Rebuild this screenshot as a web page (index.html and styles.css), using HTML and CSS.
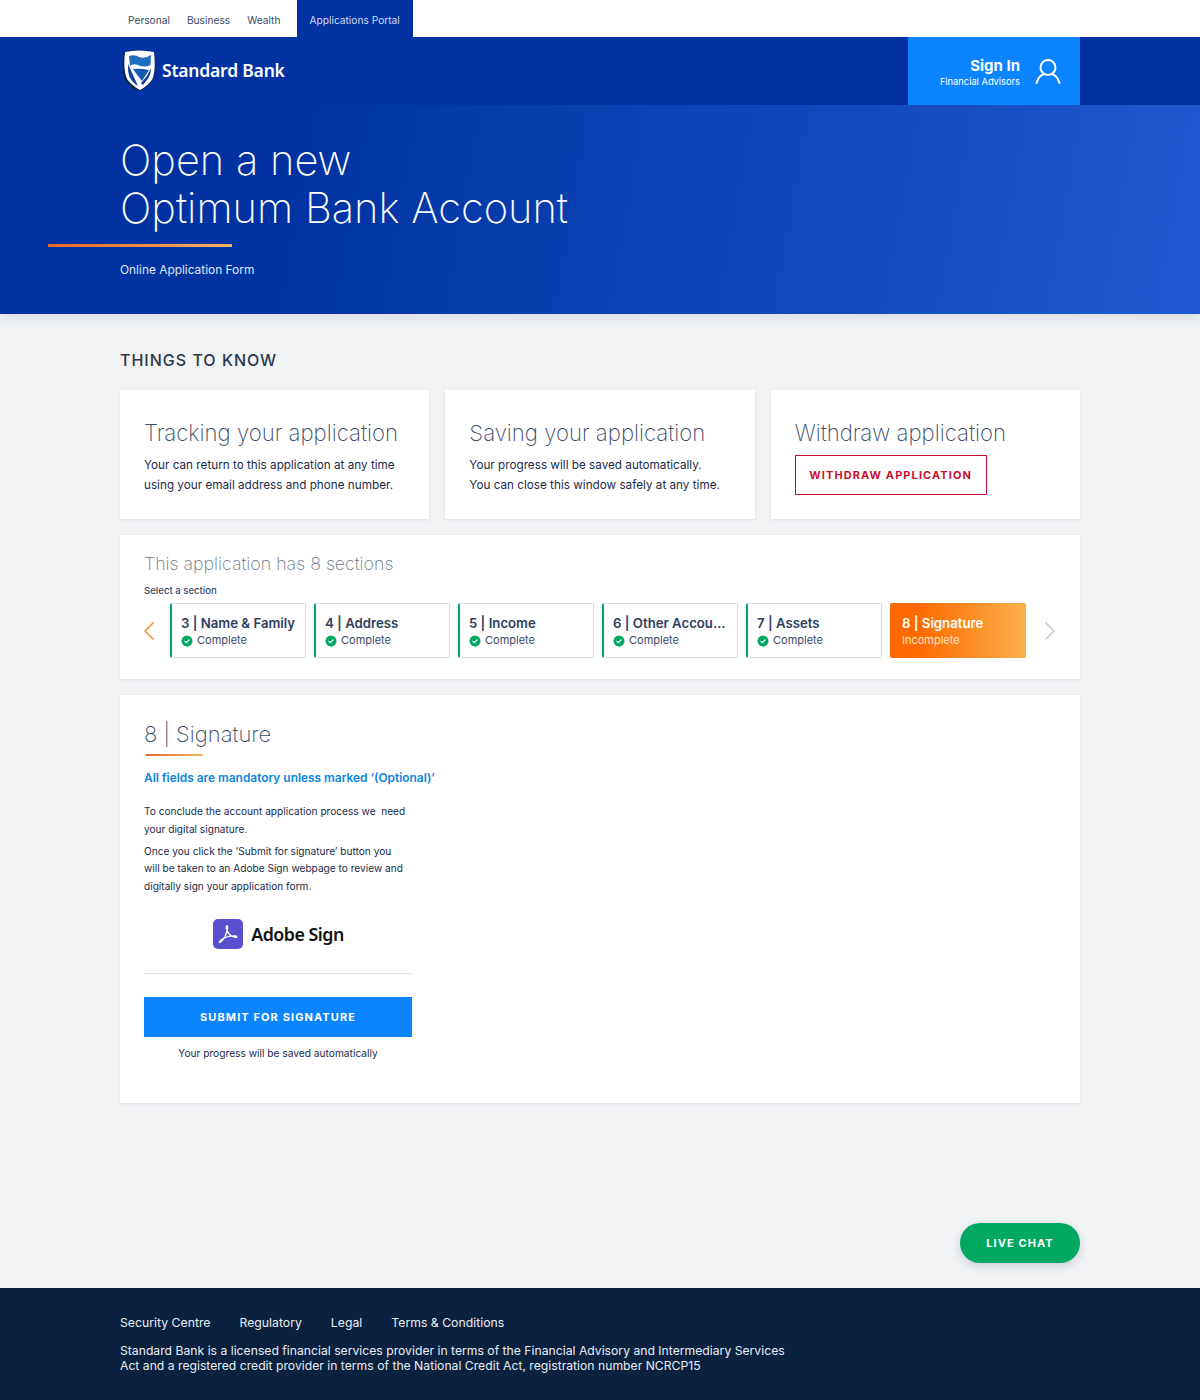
FILE: index.html
```html
<!DOCTYPE html>
<html lang="en">
<head>
  <meta charset="UTF-8">
  <title>Open a new Optimum Bank Account</title>
  <link rel="stylesheet" href="styles.css">
</head>
<body>
  <div class="topbar">
    <div class="wrap topbar-in">
      <a class="top-link">Personal</a>
      <a class="top-link">Business</a>
      <a class="top-link">Wealth</a>
      <a class="top-link top-active">Applications Portal</a>
    </div>
  </div>

  <div class="brandbar">
    <div class="wrap brandbar-in">
      <div class="logo">
        <svg class="logo-shield" width="36" height="42" viewBox="0 0 36 42">
          <path d="M3 2 Q18 -1 33 2 Q36 20 32 30 Q27 37 18 41 Q9 37 4 30 Q0 20 3 2Z" fill="#0a2240"/>
          <path d="M4 2 Q18 -1 33 2 Q35 20 31.5 29 Q27 36 19 40 Q11 36 6 29 Q2 20 4 2Z" fill="#fff"/>
          <path d="M8 6 Q14 4 18 7 Q24 9 30 5 L29.5 15 Q23 18 17 15 Q12 13 9 16Z" fill="#1f6fc0"/>
          <path d="M7 14 L17 36 Q11 32 8.5 27 Q6.5 21 7 14Z" fill="#0f3f9a"/>
          <path d="M12 19 Q19 18 28 20 L21 31 Q16 25 12 19Z" fill="#1458b4"/>
          <path d="M30 18 Q30 24 27.5 28 L22 35 L20 33 L26 26Z" fill="#0f3f9a"/>
        </svg>
        <span class="logo-name">Standard Bank</span>
      </div>
      <div class="signin">
        <div class="signin-text">
          <div class="signin-title">Sign In</div>
          <div class="signin-sub">Financial Advisors</div>
        </div>
        <svg width="26" height="26" viewBox="0 0 26 26" fill="none" stroke="#fff" stroke-width="2" stroke-linecap="round">
          <circle cx="13" cy="9.5" r="7.5"/>
          <path d="M1.5 25 Q4 17.5 8.5 16.2 M24.5 25 Q22 17.5 17.5 16.2"/>
        </svg>
      </div>
    </div>
  </div>

  <div class="hero">
    <div class="wrap">
      <h1 class="hero-title">Open a new<br>Optimum Bank Account</h1>
      <div class="hero-line"></div>
      <p class="hero-sub">Online Application Form</p>
    </div>
  </div>

  <div class="wrap main">
    <h2 class="know-title">THINGS TO KNOW</h2>

    <div class="cards">
      <div class="card info-card">
        <h3 class="card-title">Tracking your application</h3>
        <p class="card-text">Your can return to this application at any time using your email address and phone number.</p>
      </div>
      <div class="card info-card">
        <h3 class="card-title">Saving your application</h3>
        <p class="card-text">Your progress will be saved automatically.<br>You can close this window safely at any time.</p>
      </div>
      <div class="card info-card">
        <h3 class="card-title">Withdraw application</h3>
        <button class="btn-withdraw">WITHDRAW APPLICATION</button>
      </div>
    </div>

    <div class="card sections">
      <h3 class="sections-title">This application has 8 sections</h3>
      <div class="sections-label">Select a section</div>
      <div class="tabs">
        <svg class="arrow" width="12" height="20" viewBox="0 0 12 20" fill="none" stroke="#f08a24" stroke-width="1.5"><path d="M9.5 1.5 L1 10 L9.5 18.5"/></svg>
        <div class="tab">
          <div class="tab-name">3 | Name &amp; Family</div>
          <div class="tab-status"><svg class="tick" width="12" height="12" viewBox="0 0 12 12"><circle cx="6" cy="6" r="5.5" fill="#00a862"/><path d="M3.6 6 L5.3 7.6 L8.4 4.6" fill="none" stroke="#fff" stroke-width="1.3"/></svg>Complete</div>
        </div>
        <div class="tab">
          <div class="tab-name">4 | Address</div>
          <div class="tab-status"><svg class="tick" width="12" height="12" viewBox="0 0 12 12"><circle cx="6" cy="6" r="5.5" fill="#00a862"/><path d="M3.6 6 L5.3 7.6 L8.4 4.6" fill="none" stroke="#fff" stroke-width="1.3"/></svg>Complete</div>
        </div>
        <div class="tab">
          <div class="tab-name">5 | Income</div>
          <div class="tab-status"><svg class="tick" width="12" height="12" viewBox="0 0 12 12"><circle cx="6" cy="6" r="5.5" fill="#00a862"/><path d="M3.6 6 L5.3 7.6 L8.4 4.6" fill="none" stroke="#fff" stroke-width="1.3"/></svg>Complete</div>
        </div>
        <div class="tab">
          <div class="tab-name">6 | Other Accou...</div>
          <div class="tab-status"><svg class="tick" width="12" height="12" viewBox="0 0 12 12"><circle cx="6" cy="6" r="5.5" fill="#00a862"/><path d="M3.6 6 L5.3 7.6 L8.4 4.6" fill="none" stroke="#fff" stroke-width="1.3"/></svg>Complete</div>
        </div>
        <div class="tab">
          <div class="tab-name">7 | Assets</div>
          <div class="tab-status"><svg class="tick" width="12" height="12" viewBox="0 0 12 12"><circle cx="6" cy="6" r="5.5" fill="#00a862"/><path d="M3.6 6 L5.3 7.6 L8.4 4.6" fill="none" stroke="#fff" stroke-width="1.3"/></svg>Complete</div>
        </div>
        <div class="tab tab-current">
          <div class="tab-name">8 | Signature</div>
          <div class="tab-status">Incomplete</div>
        </div>
        <svg class="arrow arrow-next" width="12" height="20" viewBox="0 0 12 20" fill="none" stroke="#c3c8cf" stroke-width="1.5"><path d="M1.5 1.5 L10 10 L1.5 18.5"/></svg>
      </div>
    </div>

    <div class="card signature">
      <h3 class="sig-title">8 | Signature</h3>
      <div class="sig-line"></div>
      <p class="sig-note">All fields are mandatory unless marked ‘(Optional)’</p>
      <div class="sig-col">
        <p class="sig-text sig-text-first">To conclude the account application process we&nbsp; need your digital signature.</p>
        <p class="sig-text">Once you click the ‘Submit for signature’ button you will be taken to an Adobe Sign webpage to review and digitally sign your application form.</p>
        <div class="adobe">
          <svg width="30" height="30" viewBox="0 0 30 30">
            <rect width="30" height="30" rx="5" fill="#5a4fcf"/>
            <path d="M6.5 23.5 Q9 23 12 17.5 Q15 10.5 14.5 7.5 Q14 6 13.3 7.5 Q13 11 16.5 15.5 Q19.5 18.5 23.5 18.5 Q24.5 17.5 22.5 17 Q16 16.5 10.5 19.5 Q6 22 6.5 23.5Z" fill="none" stroke="#fff" stroke-width="1.3" stroke-linejoin="round"/>
          </svg>
          <span class="adobe-name">Adobe Sign</span>
        </div>
        <div class="sig-rule"></div>
        <button class="btn-submit">SUBMIT FOR SIGNATURE</button>
        <p class="sig-saved">Your progress will be saved automatically</p>
      </div>
    </div>

    <div class="chat-row">
      <button class="btn-chat">LIVE CHAT</button>
    </div>
  </div>

  <div class="footer">
    <div class="wrap">
      <div class="foot-links">
        <a>Security Centre</a>
        <a>Regulatory</a>
        <a>Legal</a>
        <a>Terms &amp; Conditions</a>
      </div>
      <p class="foot-text">Standard Bank is a licensed financial services provider in terms of the Financial Advisory and Intermediary Services Act and a registered credit provider in terms of the National Credit Act, registration number NCRCP15</p>
    </div>
  </div>
</body>
</html>
```

FILE: styles.css
```css
* {
  margin: 0;
  padding: 0;
  box-sizing: border-box;
}
body {
  background: #f1f3f5;
  font-family: "Inter", "Liberation Sans", sans-serif;
  color: #1b2a4a;
}
.wrap {
  width: 960px;
  margin: 0 auto;
}

/* top links */
.topbar {
  background: #fff;
  height: 37px;
}
.topbar-in {
  display: flex;
  height: 37px;
}
.top-link {
  font-size: 10.2px;
  line-height: 41px;
  color: #3a4a64;
  margin-left: 8px;
  margin-right: 9px;
}
.top-active {
  background: #0033a1;
  color: #cfdcf5;
  margin-left: 8px;
  padding: 0 12px;
  width: 116px;
  white-space: nowrap;
}

/* logo and sign in */
.brandbar {
  background: #0033a1;
  height: 68px;
}
.brandbar-in {
  display: flex;
  justify-content: space-between;
  height: 68px;
}
.logo {
  display: flex;
  align-items: center;
  gap: 5px;
  padding-left: 1px;
}
.logo-name {
  font-family: "Noto Sans", sans-serif;
  font-size: 17.5px;
  font-weight: 600;
  color: #fff;
  letter-spacing: -0.2px;
  padding-bottom: 2px;
}
.signin {
  width: 172px;
  background: #0a84ff;
  display: flex;
  align-items: center;
  justify-content: flex-end;
  gap: 15px;
  padding-right: 19px;
  color: #fff;
  text-align: right;
}
.signin-text {
  padding-top: 3px;
}
.signin-title {
  font-size: 15px;
  font-weight: 700;
  line-height: 18px;
}
.signin-sub {
  font-size: 9.3px;
  line-height: 14px;
}

/* hero */
.hero {
  height: 209px;
  background: linear-gradient(100deg, #0033a1 25%, #2059d2 100%);
  box-shadow: 0 4px 14px rgba(30, 50, 90, 0.12);
  padding-top: 32px;
}
.hero-title {
  font-weight: 200;
  font-size: 41.6px;
  line-height: 47.5px;
  color: #fff;
}
.hero-line {
  width: 184px;
  height: 3px;
  margin: 12px 0 0 -72px;
  background: linear-gradient(90deg, #e8682a, #f2b463);
}
.hero-sub {
  font-size: 11.9px;
  line-height: 16px;
  color: #dfe8fa;
  margin-top: 15px;
}

/* cards */
.main {
  padding-top: 36px;
}
.know-title {
  font-size: 16px;
  font-weight: 500;
  letter-spacing: 1px;
  line-height: 20px;
  color: #2b3648;
  margin-bottom: 20px;
}
.card {
  background: #fff;
  box-shadow: 0 1px 4px rgba(30, 50, 90, 0.08);
}
.cards {
  display: grid;
  grid-template-columns: repeat(3, 1fr);
  gap: 16px;
  margin-bottom: 16px;
}
.info-card {
  height: 129px;
  padding: 28px 24px 0;
}
.card-title {
  font-weight: 250;
  font-size: 22.2px;
  line-height: 30px;
  color: #3b4a66;
  margin-bottom: 7px;
}
.card-text {
  font-size: 11.72px;
  line-height: 20px;
  color: #1b2a4a;
}
.btn-withdraw {
  width: 192px;
  height: 40px;
  background: #fff;
  border: 1px solid #c8102e;
  color: #c8102e;
  font-family: "Inter", sans-serif;
  font-size: 11px;
  font-weight: 700;
  letter-spacing: 1.1px;
}

/* section picker */
.sections {
  height: 144px;
  padding: 16px 24px 0;
  margin-bottom: 16px;
}
.sections-title {
  font-weight: 250;
  font-size: 17.8px;
  line-height: 25px;
  color: #6b7688;
}
.sections-label {
  font-size: 9.6px;
  font-weight: 500;
  line-height: 14px;
  color: #3b4a66;
  margin-top: 8px;
  margin-bottom: 5px;
}
.tabs {
  display: flex;
  align-items: center;
  gap: 8px;
}
.arrow {
  margin-right: 6px;
  flex-shrink: 0;
}
.arrow-next {
  margin: 0 0 0 10px;
}
.tab {
  flex-shrink: 0;
  width: 136px;
  height: 55px;
  background: #fff;
  border: 1px solid #d5d9de;
  border-left: 2px solid #00a862;
  border-radius: 2px;
  padding: 10px 0 0 9px;
  white-space: nowrap;
}
.tab-name {
  font-size: 13.2px;
  font-weight: 600;
  line-height: 18px;
  color: #2f3d5e;
}
.tab-status {
  display: flex;
  align-items: center;
  gap: 4px;
  font-size: 11px;
  line-height: 15px;
  margin-top: 1px;
  color: #3b4a66;
}
.tab-current {
  background: linear-gradient(90deg, #ff6a00 20%, #fbb04c 100%);
  border: 0;
  padding-left: 12px;
  padding-top: 11px;
}
.tab-current .tab-name {
  color: #fff;
}
.tab-current .tab-status {
  color: #ffe3c7;
}

/* signature */
.signature {
  height: 408px;
  padding: 23px 24px 0;
}
.sig-title {
  font-weight: 250;
  font-size: 22px;
  line-height: 32px;
  color: #3b4a66;
}
.sig-line {
  width: 57px;
  height: 2px;
  margin: 4px 0 0 2px;
  background: linear-gradient(90deg, #e8682a, #f2b463);
}
.sig-note {
  font-size: 11.9px;
  font-weight: 600;
  line-height: 16px;
  color: #0a84e0;
  margin-top: 14px;
}
.sig-col {
  width: 268px;
  margin-top: 17px;
}
.sig-text {
  font-size: 10.15px;
  line-height: 17.5px;
  color: #1b2a4a;
  margin-top: 4.5px;
  width: 263px;
}
.sig-text-first {
  margin-top: 0;
}
.adobe {
  display: flex;
  align-items: center;
  justify-content: center;
  gap: 8px;
  margin-top: 24px;
  padding-left: 1px;
}
.adobe-name {
  font-family: "Noto Sans", sans-serif;
  font-size: 17.8px;
  font-weight: 600;
  color: #111;
  letter-spacing: -0.5px;
}
.sig-rule {
  height: 1px;
  background: #dcdfe3;
  margin-top: 24px;
}
.btn-submit {
  width: 268px;
  height: 40px;
  margin-top: 23px;
  background: #0a84ff;
  border: 0;
  color: #fff;
  font-family: "Inter", sans-serif;
  font-size: 11px;
  font-weight: 700;
  letter-spacing: 1.1px;
}
.sig-saved {
  font-size: 10.2px;
  line-height: 16px;
  text-align: center;
  margin-top: 8px;
}

/* chat */
.chat-row {
  display: flex;
  justify-content: flex-end;
  padding: 120px 0 25px;
}
.btn-chat {
  width: 120px;
  height: 40px;
  border: 0;
  border-radius: 20px;
  background: #00a862;
  color: #fff;
  font-family: "Inter", sans-serif;
  font-size: 11px;
  font-weight: 700;
  letter-spacing: 1.1px;
  box-shadow: 0 3px 10px rgba(30, 50, 90, 0.2);
}

/* footer */
.footer {
  background: #0a2240;
  height: 112px;
  padding-top: 26px;
  color: #e8edf4;
}
.foot-links {
  display: flex;
  gap: 29px;
  font-size: 12.25px;
  line-height: 18px;
}
.foot-text {
  font-size: 12.2px;
  line-height: 15px;
  width: 680px;
  margin-top: 11px;
}
```
